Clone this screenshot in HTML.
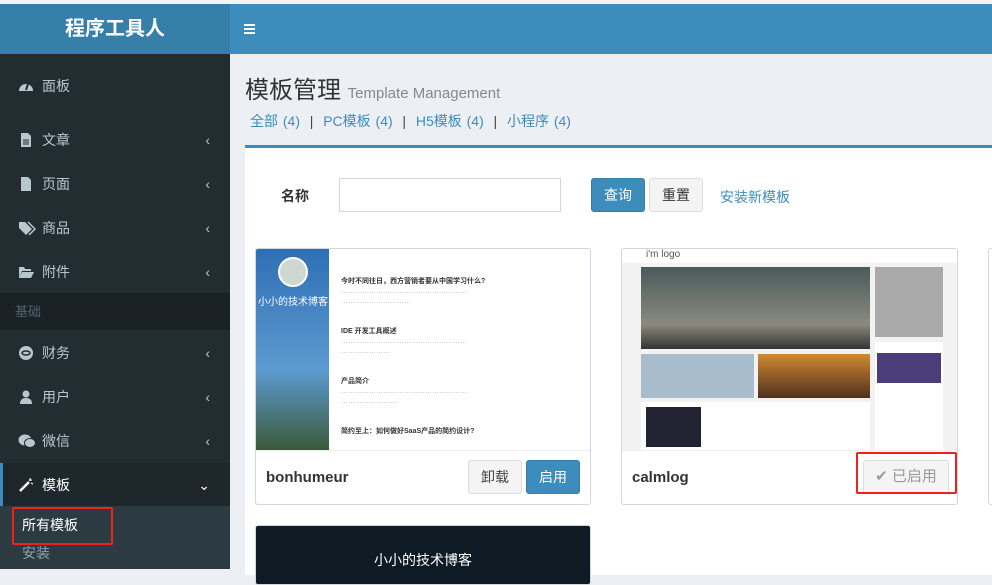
<!DOCTYPE html>
<html><head><meta charset="utf-8"><style>
*{box-sizing:border-box;margin:0;padding:0}
body{width:992px;height:569px;overflow:hidden;background:#ecf0f5;font-family:"Liberation Sans","Noto Sans CJK SC",sans-serif;position:relative}
.top{position:absolute;left:0;top:0;width:992px;height:4px;background:#f4f4f4}
.logo{position:absolute;left:0;top:4px;width:230px;height:50px;background:#367fa9;color:#fff;font-weight:bold;font-size:20px;text-align:center;line-height:50px}
.nav{position:absolute;left:230px;top:4px;right:0;height:50px;background:#3c8dbc}
.side{position:absolute;left:0;top:54px;width:230px;height:515px;background:#222d32}
.it{position:absolute;left:0;width:230px;height:44px;color:#b8c7ce;font-size:14px;line-height:44px;padding-left:42px}
.it svg{position:absolute;left:18px;top:15px}
.it .ar{position:absolute;right:20px;top:0;font-size:14px}
.hdr{position:absolute;left:0;width:230px;height:37px;background:#1a2226;color:#4b646f;font-size:13px;line-height:37px;padding-left:15px}
.act{background:#1e282c;color:#fff;border-left:3px solid #3c8dbc;padding-left:39px}
.act svg{left:15px}
.box{position:absolute;left:245px;top:145px;width:760px;height:430px;background:#fff;border-top:3px solid #3c8dbc}
.card{position:absolute;background:#fff;border:1px solid #d2d6de;border-radius:3px;overflow:hidden}
.btn{position:absolute;height:34px;line-height:32px;font-size:14px;text-align:center;border-radius:3px}
</style></head><body>
<div class="top"></div>
<div class="logo">程序工具人</div>
<div class="nav"><svg style="position:absolute;left:14px;top:20px" width="11" height="10"><rect y="0" width="11" height="2" fill="#fff"/><rect y="4" width="11" height="2" fill="#fff"/><rect y="8" width="11" height="2" fill="#fff"/></svg></div>
<div class="side">
<div class="it" style="top:10px"><svg width="16" height="14" viewBox="0 0 16 14"><path d="M1 12A7 7 0 1 1 15 12Z" fill="#b8c7ce"/><path d="M8 11L10 5" stroke="#222d32" stroke-width="2"/></svg>面板</div>
<div class="it" style="top:64px"><svg width="16" height="14" viewBox="0 0 16 14"><path d="M3 0H10L13 3V14H3Z" fill="#b8c7ce"/><path d="M5 7H11M5 9H11M5 11H11" stroke="#222d32"/></svg>文章<span class="ar">‹</span></div>
<div class="it" style="top:108px"><svg width="16" height="14" viewBox="0 0 16 14"><path d="M3 0H10L13 3V14H3Z" fill="#b8c7ce"/></svg>页面<span class="ar">‹</span></div>
<div class="it" style="top:152px"><svg width="18" height="14" viewBox="0 0 18 14"><path d="M1 1H7L14 8L8 14L1 7Z" fill="#b8c7ce"/><path d="M10 1L17 8L11 14" stroke="#b8c7ce" fill="none" stroke-width="1.5"/></svg>商品<span class="ar">‹</span></div>
<div class="it" style="top:196px"><svg width="17" height="14" viewBox="0 0 17 14"><path d="M1 2H6L7 4H13V6H4L1 13Z M4 7H16L13 13H1Z" fill="#b8c7ce"/></svg>附件<span class="ar">‹</span></div>
<div class="hdr" style="top:239px">基础</div>
<div class="it" style="top:277px"><svg width="16" height="14" viewBox="0 0 16 14"><circle cx="8" cy="7" r="7" fill="#b8c7ce"/><ellipse cx="8" cy="7" rx="4" ry="2" fill="none" stroke="#222d32" stroke-width="1.5"/></svg>财务<span class="ar">‹</span></div>
<div class="it" style="top:321px"><svg width="16" height="14" viewBox="0 0 16 14"><circle cx="8" cy="4" r="3.5" fill="#b8c7ce"/><path d="M2 14Q2 8 8 8Q14 8 14 14Z" fill="#b8c7ce"/></svg>用户<span class="ar">‹</span></div>
<div class="it" style="top:365px"><svg width="18" height="14" viewBox="0 0 18 14"><ellipse cx="7" cy="6" rx="6.5" ry="5.5" fill="#b8c7ce"/><ellipse cx="12" cy="9" rx="5.5" ry="4.5" fill="#b8c7ce" stroke="#222d32"/></svg>微信<span class="ar">‹</span></div>
<div class="it act" style="top:409px;height:43px"><svg width="16" height="14" viewBox="0 0 16 14"><path d="M2 13L11 4" stroke="#fff" stroke-width="2.5"/><path d="M12 0V3M14 2H11M13 5L15 6" stroke="#fff"/></svg>模板<span class="ar">⌄</span></div>
<div style="position:absolute;left:0;top:452px;width:230px;height:63px;background:#2c3b41"></div>
<div style="position:absolute;left:12px;top:453px;width:101px;height:38px;border:2px solid #f0201c;border-radius:2px;color:#fff;font-size:14px;line-height:32px;padding-left:8px">所有模板</div>
<div style="position:absolute;left:22px;top:489px;color:#8aa4af;font-size:14px">安装</div>
</div>
<div style="position:absolute;left:245px;top:70px;font-size:24px;color:#333">模板管理 <span style="font-size:15px;color:#888">Template Management</span></div>
<div style="position:absolute;left:250px;top:111px;font-size:14px;color:#3c8dbc;word-spacing:1px">全部 (4) <span style="color:#444">&nbsp;|&nbsp;</span> PC模板 (4) <span style="color:#444">&nbsp;|&nbsp;</span> H5模板 (4) <span style="color:#444">&nbsp;|&nbsp;</span> 小程序 (4)</div>
<div class="box"></div>
<div style="position:absolute;left:281px;top:186px;font-size:14px;font-weight:bold;color:#333">名称</div>
<div style="position:absolute;left:339px;top:178px;width:222px;height:34px;border:1px solid #d2d6de"></div>
<div class="btn" style="left:591px;top:178px;width:54px;background:#3c8dbc;color:#fff;border:1px solid #367fa9">查询</div>
<div class="btn" style="left:649px;top:178px;width:54px;background:#f4f4f4;color:#333;border:1px solid #ddd">重置</div>
<div style="position:absolute;left:720px;top:187px;font-size:14px;color:#3c8dbc">安装新模板</div>

<div class="card" style="left:255px;top:248px;width:336px;height:257px">
 <div style="position:absolute;left:0;top:0;width:73px;height:201px;background:linear-gradient(#2e6fb5,#5d9ad0 60%,#3b5a3a)"></div>
 <div style="position:absolute;left:22px;top:8px;width:30px;height:30px;border-radius:50%;background:#cfd8d0;border:2px solid #fff"></div>
 <div style="position:absolute;left:2px;top:44px;color:#fff;font-size:10px;white-space:nowrap">小小的技术博客</div>
 <div style="position:absolute;left:85px;top:28px;font-size:7px;line-height:10px;color:#333;width:240px">
 <b>今时不同往日，西方营销者要从中国学习什么?</b><br><span style="color:#aaa">………………………………………………<br>…………………………</span><br><br><br><b>IDE 开发工具概述</b><br><span style="color:#aaa">………………………………………………<br>…………………</span><br><br><br><b>产品简介</b><br><span style="color:#aaa">………………………………………………<br>……………………</span><br><br><br><b>简约至上：如何做好SaaS产品的简约设计?</b></div>
 <div style="position:absolute;left:0;top:201px;width:100%;border-top:1px solid #eee"></div>
 <div style="position:absolute;left:10px;top:220px;font-size:15px;font-weight:bold;color:#333">bonhumeur</div>
 <div class="btn" style="left:212px;top:211px;width:54px;background:#f4f4f4;color:#444;border:1px solid #ddd">卸载</div>
 <div class="btn" style="left:270px;top:211px;width:54px;background:#3c8dbc;color:#fff;border:1px solid #367fa9">启用</div>
</div>

<div class="card" style="left:621px;top:248px;width:337px;height:257px">
 <div style="position:absolute;left:0;top:0;width:100%;height:201px;background:#f2f2f2"></div>
 <div style="position:absolute;left:0;top:0;width:100%;height:14px;background:#fff;font-size:10px;color:#555;padding-left:24px">i'm logo</div>
 <div style="position:absolute;left:19px;top:18px;width:229px;height:82px;background:linear-gradient(#4a5a5a,#8a8a80 70%,#333)"></div>
 <div style="position:absolute;left:253px;top:18px;width:68px;height:70px;background:#aaa"></div>
 <div style="position:absolute;left:19px;top:105px;width:113px;height:44px;background:#a9bccc"></div>
 <div style="position:absolute;left:136px;top:105px;width:112px;height:44px;background:linear-gradient(#d08a30,#503020)"></div>
 <div style="position:absolute;left:19px;top:153px;width:229px;height:48px;background:#fff"></div>
 <div style="position:absolute;left:24px;top:158px;width:55px;height:40px;background:#223"></div>
 <div style="position:absolute;left:253px;top:93px;width:68px;height:108px;background:#fff"></div>
 <div style="position:absolute;left:255px;top:104px;width:64px;height:30px;background:#4b3d7a"></div>
 <div style="position:absolute;left:0;top:201px;width:100%;border-top:1px solid #eee"></div>
 <div style="position:absolute;left:10px;top:220px;font-size:15px;font-weight:bold;color:#333">calmlog</div>
 <div class="btn" style="left:241px;top:211px;width:86px;background:#f4f4f4;color:#999;border:1px solid #ddd;font-size:15px">✔ 已启用</div>
</div>
<div style="position:absolute;left:856px;top:452px;width:101px;height:42px;border:2px solid #f0201c;border-radius:2px"></div>
<div class="card" style="left:988px;top:248px;width:20px;height:257px"></div>
<div class="card" style="left:255px;top:525px;width:336px;height:60px;background:#0e1a24">
 <div style="position:absolute;left:0;top:24px;width:100%;text-align:center;color:#fff;font-size:14px">小小的技术博客</div>
</div>
</body></html>
